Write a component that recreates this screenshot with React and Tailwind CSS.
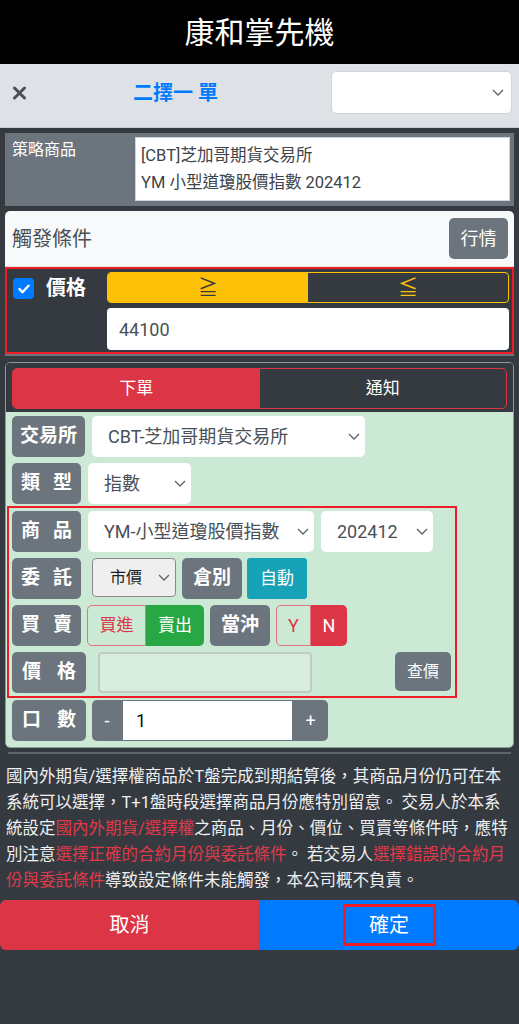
import React from "react";

const Chevron = () => (
  <svg width="12" height="7" viewBox="0 0 12 7" className="shrink-0">
    <path d="M1 1l5 5 5-5" fill="none" stroke="#5a6169" strokeWidth="1.3" />
  </svg>
);

function Sel({ w, text, pl = "pl-[16px]" }) {
  return (
    <div className={`${w} h-[41px] bg-white rounded-[5px] flex items-center justify-between ${pl} pr-[5px] text-[18px] text-[#495057]`}>
      <span>{text}</span>
      <Chevron />
    </div>
  );
}

function Label2({ w, a, b, px = "px-[9px]" }) {
  return (
    <div className={`${w} h-[41px] shrink-0 rounded-[5px] bg-[#6c757d] text-white font-bold text-[19px] flex items-center justify-between ${px}`}>
      <span>{a}</span>
      <span>{b}</span>
    </div>
  );
}

const Red = ({ children }) => <span className="text-[#e0394a]">{children}</span>;

export default function App() {
  return (
    <div className="w-[519px] min-h-[1024px] bg-[#343a40] font-['Roboto','Noto_Sans_CJK_TC',sans-serif]">
      <div className="h-16 bg-black flex items-center justify-center text-white text-[30px]">康和掌先機</div>
      <div className="h-16 bg-[#dee2e6] border-b border-[#c9ced3] flex items-center pb-[6px]">
        <svg className="ml-3" width="15" height="14" viewBox="0 0 15 14">
          <path d="M2.5 2l10 10M12.5 2l-10 10" stroke="#495057" strokeWidth="3" strokeLinecap="round" />
        </svg>
        <span className="ml-[106px] text-[20px] font-bold text-[#007bff]">二擇一 單</span>
        <div className="ml-auto mr-[7px] w-[181px] h-[43px] bg-white rounded-[5px] border border-[#ced4da] flex items-center justify-end pr-[7px]">
          <Chevron />
        </div>
      </div>

      <div className="px-[5px] pt-[5px]">
        <div className="bg-[#6c757d] flex pt-[4px] pb-[5px] pr-[4px] pl-[7px]">
          <div className="w-[123px] text-white text-[16px] leading-[24px] mt-[1px]">策略商品</div>
          <div className="flex-1 bg-white border border-[#ced4da] px-[5px] py-[4px] text-[16.5px] leading-[27px] text-[#3d4349]">
            <div>[CBT]芝加哥期貨交易所</div>
            <div>YM 小型道瓊股價指數 202412</div>
          </div>
        </div>

        <div className="mt-[5px] rounded-t-[5px] overflow-hidden border-b-2 border-[#6c757d]">
          <div className="h-[56px] bg-[#f8f9fa] flex items-center justify-between pl-[7px] pr-[6px] border-b border-[#dee2e6]">
            <span className="text-[20px] text-[#495057]">觸發條件</span>
            <div className="w-[59px] h-[41px] rounded-[5px] bg-[#6c757d] text-white text-[18px] flex items-center justify-center">行情</div>
          </div>
          <div className="border-2 border-[#ee1c24] bg-[#343a40] flex pt-[3px] pb-[2px] pl-[3px] pr-[3px]">
            <div className="w-[97px] flex items-start">
              <div className="ml-[3px] mt-[6px] w-[21px] h-[21px] rounded-[4px] bg-[#007bff] flex items-center justify-center">
                <svg width="12" height="10" viewBox="0 0 12 10">
                  <path d="M1.5 5.2l3 3 6-6.5" fill="none" stroke="white" strokeWidth="2.4" strokeLinecap="round" strokeLinejoin="round" />
                </svg>
              </div>
              <span className="ml-[12px] mt-[1px] text-white text-[20px] font-bold leading-[30px]">價格</span>
            </div>
            <div className="flex-1 flex flex-col gap-[5px]">
              <div className="h-[31px] flex rounded-[4px] border border-[#ffc107] overflow-hidden">
                <div className="w-1/2 bg-[#ffc107] flex items-center justify-center text-[#343a40] text-[20px]">≧</div>
                <div className="flex-1 flex items-center justify-center text-[#ffc107] text-[20px]">≦</div>
              </div>
              <div className="h-[42px] bg-white rounded-[4px] flex items-center px-[12px] text-[18px] text-[#495057]">44100</div>
            </div>
          </div>
        </div>

        <div className="mt-[6px] rounded-[5px] border border-[#8e9b93] overflow-hidden">
          <div className="bg-[#343a40] pt-[5px] pb-[3px] px-[6px]">
            <div className="h-[41px] flex rounded-[5px] border border-[#dc3545] overflow-hidden">
              <div className="w-1/2 bg-[#dc3545] text-white text-[17px] flex items-center justify-center">下單</div>
              <div className="flex-1 text-white text-[17px] flex items-center justify-center">通知</div>
            </div>
          </div>
          <div className="bg-[#cce9d5] px-[6px] pt-[4px] pb-[6px] flex flex-col">
            <div className="flex h-[41px]">
              <div className="w-[73px] h-[41px] rounded-[5px] bg-[#6c757d] text-white font-bold text-[19px] flex items-center justify-center">交易所</div>
              <div className="ml-[7px]"><Sel w="w-[273px]" text="CBT-芝加哥期貨交易所" /></div>
            </div>
            <div className="flex h-[41px] mt-[6px]">
              <Label2 w="w-[69px]" a="類" b="型" />
              <div className="ml-[7px]"><Sel w="w-[103px]" text="指數" /></div>
            </div>

            <div className="-ml-[5px] w-[450px] mt-[2px] border-2 border-[#ee1c24] pl-[3px] pt-[3px] pb-[3px] flex flex-col">
              <div className="flex h-[41px]">
                <Label2 w="w-[69px]" a="商" b="品" />
                <div className="ml-[7px]"><Sel w="w-[226px]" text="YM-小型道瓊股價指數" /></div>
                <div className="ml-[7px]"><Sel w="w-[112px]" text="202412" /></div>
              </div>
              <div className="flex h-[41px] mt-[6px] items-start">
                <Label2 w="w-[69px]" a="委" b="託" />
                <div className="ml-[11px] w-[84px] h-[39px] bg-[#efefef] border border-[#8a8a8a] rounded-[4px] flex items-center justify-between pl-[17px] pr-[5px] text-[16px] text-[#222]">
                  <span>市價</span>
                  <Chevron />
                </div>
                <div className="ml-[6px] w-[60px] h-[41px] rounded-[5px] bg-[#6c757d] text-white font-bold text-[19px] flex items-center justify-center">倉別</div>
                <div className="ml-[5px] w-[60px] h-[41px] rounded-[3px] bg-[#17a2b8] text-white text-[17px] flex items-center justify-center">自動</div>
              </div>
              <div className="flex h-[41px] mt-[6px]">
                <Label2 w="w-[69px]" a="買" b="賣" />
                <div className="ml-[6px] w-[59px] h-[41px] rounded-l-[5px] border border-[#e07480] text-[#dc3545] text-[17px] flex items-center justify-center">買進</div>
                <div className="w-[58px] h-[41px] rounded-r-[5px] bg-[#28a745] text-white text-[17px] flex items-center justify-center">賣出</div>
                <div className="ml-[6px] w-[60px] h-[41px] rounded-[5px] bg-[#6c757d] text-white font-bold text-[19px] flex items-center justify-center">當沖</div>
                <div className="ml-[6px] w-[35px] h-[41px] rounded-l-[5px] border border-[#e07480] text-[#dc3545] text-[18px] flex items-center justify-center">Y</div>
                <div className="w-[36px] h-[41px] rounded-r-[5px] bg-[#dc3545] text-white text-[18px] flex items-center justify-center">N</div>
              </div>
              <div className="flex h-[41px] mt-[6px] items-start">
                <Label2 w="w-[74px]" a="價" b="格" px="px-[10px]" />
                <div className="ml-[12px] w-[214px] h-[41px] rounded-[4px] border-2 border-[#bfcbc3] bg-[#d6ede0]" />
                <div className="ml-[83px] w-[56px] h-[39px] rounded-[5px] bg-[#6c757d] text-white text-[16px] flex items-center justify-center">查價</div>
              </div>
            </div>

            <div className="flex h-[41px] mt-[2px]">
              <Label2 w="w-[74px]" a="口" b="數" px="px-[10px]" />
              <div className="ml-[6px] w-[30px] h-[41px] rounded-l-[5px] bg-[#6c757d] text-white text-[18px] flex items-center justify-center">-</div>
              <div className="w-[171px] h-[41px] bg-white border border-[#6c757d] flex items-center pl-[13px] text-[18px] text-[#111]">1</div>
              <div className="w-[35px] h-[41px] rounded-r-[5px] bg-[#6c757d] text-white text-[18px] flex items-center justify-center">+</div>
            </div>
          </div>
        </div>
        <div className="mt-[4px] mx-[3px] h-[2px] bg-[#5d656c]" />
      </div>

      <div className="mt-[10px] px-[6px] text-[16.5px] leading-[26px] text-[#eef0f2] whitespace-nowrap">
        國內外期貨/選擇權商品於T盤完成到期結算後，其商品月份仍可在本<br />
        系統可以選擇，T+1盤時段選擇商品月份應特別留意。 交易人於本系<br />
        統設定<Red>國內外期貨/選擇權</Red>之商品、月份、價位、買賣等條件時，應特<br />
        別注意<Red>選擇正確的合約月份與委託條件</Red>。 若交易人<Red>選擇錯誤的合約月</Red><br />
        <Red>份與委託條件</Red>導致設定條件未能觸發，本公司概不負責。
      </div>

      <div className="mt-[6px] h-[50px] flex rounded-[6px] overflow-hidden">
        <div className="w-[259px] bg-[#dc3545] text-white text-[20px] flex items-center justify-center">取消</div>
        <div className="flex-1 bg-[#007bff] flex items-center justify-center">
          <div className="w-[93px] h-[42px] border-[3px] border-[#ee1c24] text-white text-[20px] flex items-center justify-center">確定</div>
        </div>
      </div>
    </div>
  );
}
